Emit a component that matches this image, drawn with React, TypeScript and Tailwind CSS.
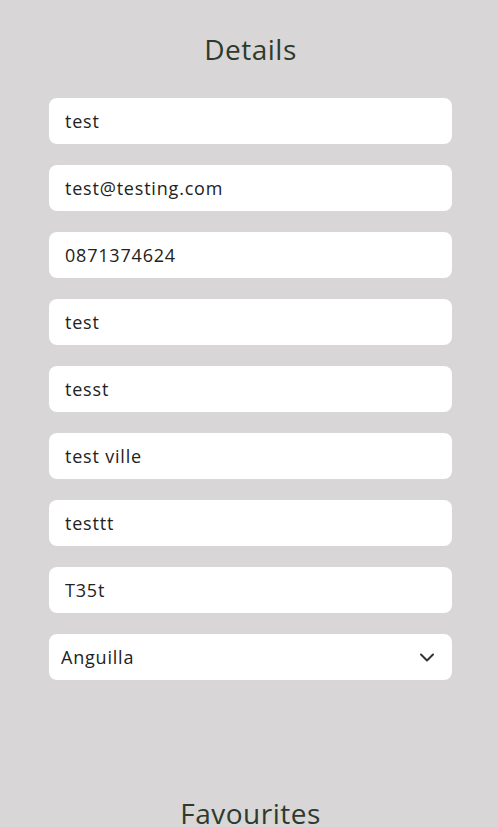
import React, { useState } from "react";

const fields = [
  "test",
  "test@testing.com",
  "0871374624",
  "test",
  "tesst",
  "test ville",
  "testtt",
  "T35t",
];

const App = () => {
  const [values, setValues] = useState<string[]>(fields);
  const [country, setCountry] = useState("Anguilla");

  return (
    <div className="min-h-[827px] bg-[#d8d6d7] font-['Open_Sans',sans-serif] text-[#2b2b2b]">
      {/* Details */}
      <div className="ml-[49px] w-[403px] pt-[32px]">
        <h2 className="mb-[31px] text-center text-[28px] leading-[35px] tracking-[0.5px] text-[#2e3b2c]">
          Details
        </h2>
        <div className="flex flex-col gap-[21px]">
          {values.map((v, i) => (
            <input
              key={i}
              value={v}
              onChange={(e) => {
                const next = [...values];
                next[i] = e.target.value;
                setValues(next);
              }}
              className="h-[46px] w-full rounded-lg bg-white px-4 text-[18px] tracking-[0.8px] text-[#222] outline-none"
            />
          ))}
          <div className="relative">
            <select
              value={country}
              onChange={(e) => setCountry(e.target.value)}
              className="h-[46px] w-full appearance-none rounded-lg bg-white px-3 text-[18px] tracking-[0.8px] text-[#222] outline-none"
            >
              <option>Anguilla</option>
              <option>Antigua and Barbuda</option>
              <option>Argentina</option>
            </select>
            <svg
              className="pointer-events-none absolute right-[18px] top-[19px]"
              width="14"
              height="9"
              viewBox="0 0 14 9"
              fill="none"
            >
              <path d="M1 1.5l6 6 6-6" stroke="#333" strokeWidth="2" strokeLinecap="round" strokeLinejoin="round" />
            </svg>
          </div>
        </div>
      </div>

      {/* Favourites */}
      <div className="ml-[49px] w-[403px] pt-[116px]">
        <h2 className="text-center text-[28px] leading-[35px] tracking-[0.5px] text-[#2e3b2c]">
          Favourites
        </h2>
      </div>
    </div>
  );
};

export default App;
